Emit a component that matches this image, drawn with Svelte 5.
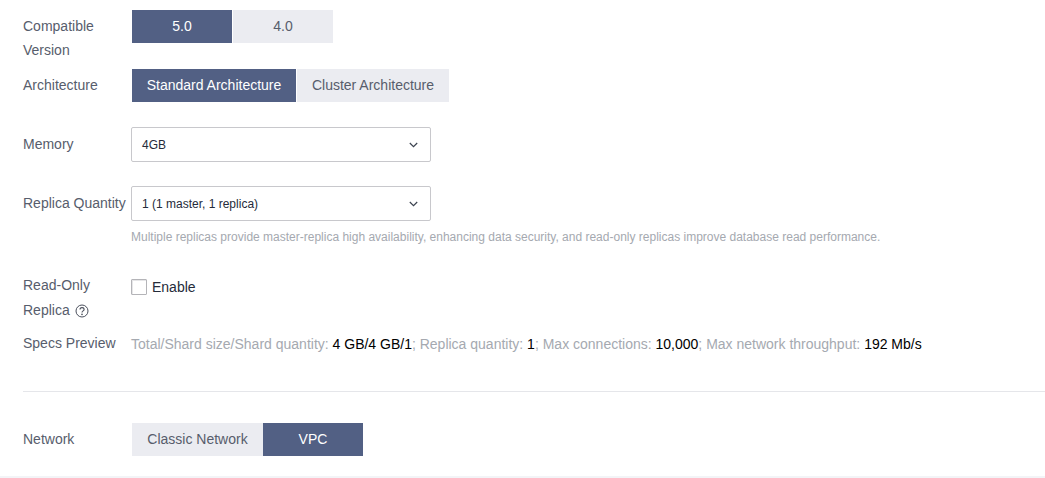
<script>
  const chevron = "M.8 1l3.700 3.700L8.200 1";
</script>

<div class="page">
  <div class="form">
    <div class="row r-version">
      <div class="label">Compatible Version</div>
      <div class="seg">
        <div class="btn on w100">5.0</div>
        <div class="btn w100">4.0</div>
      </div>
    </div>
    <div class="row r-arch">
      <div class="label single">Architecture</div>
      <div class="seg">
        <div class="btn on w164">Standard Architecture</div>
        <div class="btn w152">Cluster Architecture</div>
      </div>
    </div>
    <div class="row r-memory">
      <div class="label single">Memory</div>
      <div class="select">
        <span>4GB</span>
        <svg width="9" height="6" viewBox="0 0 9 6"><path d={chevron} fill="none" stroke="#3c4350" stroke-width="1.2" /></svg>
      </div>
    </div>
    <div class="row r-replica">
      <div class="label single">Replica Quantity</div>
      <div class="col">
        <div class="select">
          <span>1 (1 master, 1 replica)</span>
          <svg width="9" height="6" viewBox="0 0 9 6"><path d={chevron} fill="none" stroke="#3c4350" stroke-width="1.2" /></svg>
        </div>
        <div class="hint">Multiple replicas provide master-replica high availability, enhancing data security, and read-only replicas improve database read performance.</div>
      </div>
    </div>
    <div class="row r-readonly">
      <div class="label">
        Read-Only Replica
        <svg class="help" width="14" height="14" viewBox="0 0 14 14">
          <circle cx="7" cy="7" r="6" fill="none" stroke="#4a4f5c" stroke-width="1" />
          <path d="M5 5.600c0-1.200 .9-2 2-2s2.100 .8 2.100 1.900c0 1.400-2.100 1.400-2.100 3" fill="none" stroke="#4a4f5c" stroke-width="1.100" />
          <circle cx="7" cy="10.400" r=".8" fill="#4a4f5c" />
        </svg>
      </div>
      <label class="check"><span class="box"></span><span>Enable</span></label>
    </div>
    <div class="row r-specs">
      <div class="label single">Specs Preview</div>
      <div class="specs">Total/Shard size/Shard quantity: <b>4 GB/4 GB/1</b>; Replica quantity: <b>1</b>; Max connections: <b>10,000</b>; Max network throughput: <b>192 Mb/s</b></div>
    </div>
    <div class="divider"></div>
    <div class="row r-network">
      <div class="label single">Network</div>
      <div class="seg flush">
        <div class="btn w131">Classic Network</div>
        <div class="btn on w100">VPC</div>
      </div>
    </div>
  </div>
  <div class="strip"></div>
</div>

<style>
  :global(body) {
    margin: 0;
    background: #fff;
  }
  .page {
    width: 1045px;
    height: 478px;
    overflow: hidden;
    display: flex;
    flex-direction: column;
    font-family: "Liberation Sans", Arial, sans-serif;
    font-size: 14px;
    color: #252b3a;
  }
  .form {
    flex: 1;
    padding: 10px 0 0 23px;
    box-sizing: border-box;
  }
  .strip {
    height: 2px;
    background: #f3f4f7;
  }
  .row {
    display: flex;
    align-items: flex-start;
  }
  .label {
    width: 108px;
    flex: none;
    color: #575d6c;
    line-height: 24px;
    margin-top: 4px;
  }
  .label.single {
    white-space: nowrap;
  }
  .seg {
    display: flex;
    gap: 1px;
    margin-left: 1px;
  }
  .seg.flush {
    gap: 0;
  }
  .btn {
    height: 33px;
    line-height: 33px;
    text-align: center;
    background: #ebecf1;
    color: #575d6c;
    box-sizing: border-box;
    white-space: nowrap;
  }
  .btn.on {
    background: #526084;
    color: #fff;
  }
  .w100 {
    width: 100px;
  }
  .w164 {
    width: 164px;
  }
  .w152 {
    width: 152px;
  }
  .w131 {
    width: 131px;
  }
  .select {
    width: 300px;
    height: 35px;
    box-sizing: border-box;
    border: 1px solid #c8c8cc;
    border-radius: 2px;
    display: flex;
    align-items: center;
    justify-content: space-between;
    padding: 0 12px 0 10px;
    font-size: 12px;
    color: #252b3a;
  }
  .hint {
    margin-top: 8px;
    font-size: 12px;
    line-height: 16px;
    color: #a5a9b0;
    white-space: nowrap;
  }
  .r-arch {
    margin-top: 7px;
  }
  .r-memory {
    margin-top: 25px;
  }
  .r-memory .label,
  .r-replica .label {
    margin-top: 5px;
  }
  .r-replica {
    margin-top: 24px;
  }
  .r-readonly {
    margin-top: 28px;
  }
  .r-readonly .label {
    margin-top: 0;
    line-height: 25px;
  }
  .help {
    vertical-align: -3px;
    margin-left: 1px;
  }
  .check {
    display: flex;
    align-items: center;
    gap: 5px;
    height: 16px;
    margin-top: 6px;
  }
  .box {
    width: 16px;
    height: 16px;
    box-sizing: border-box;
    border: 1px solid #b4b4b8;
    border-radius: 1px;
    background: #fff;
    box-shadow: inset 1px 1px 0 #e6e6e8;
  }
  .r-specs {
    margin-top: 8px;
  }
  .r-specs .label {
    margin-top: 0;
  }
  .specs {
    color: #a5a9b0;
    line-height: 24px;
    margin-top: 1px;
    white-space: nowrap;
  }
  .specs b {
    font-weight: 400;
    color: #000;
  }
  .divider {
    height: 1px;
    background: #e5e6ea;
    margin-top: 35px;
  }
  .r-network {
    margin-top: 31px;
  }
</style>
